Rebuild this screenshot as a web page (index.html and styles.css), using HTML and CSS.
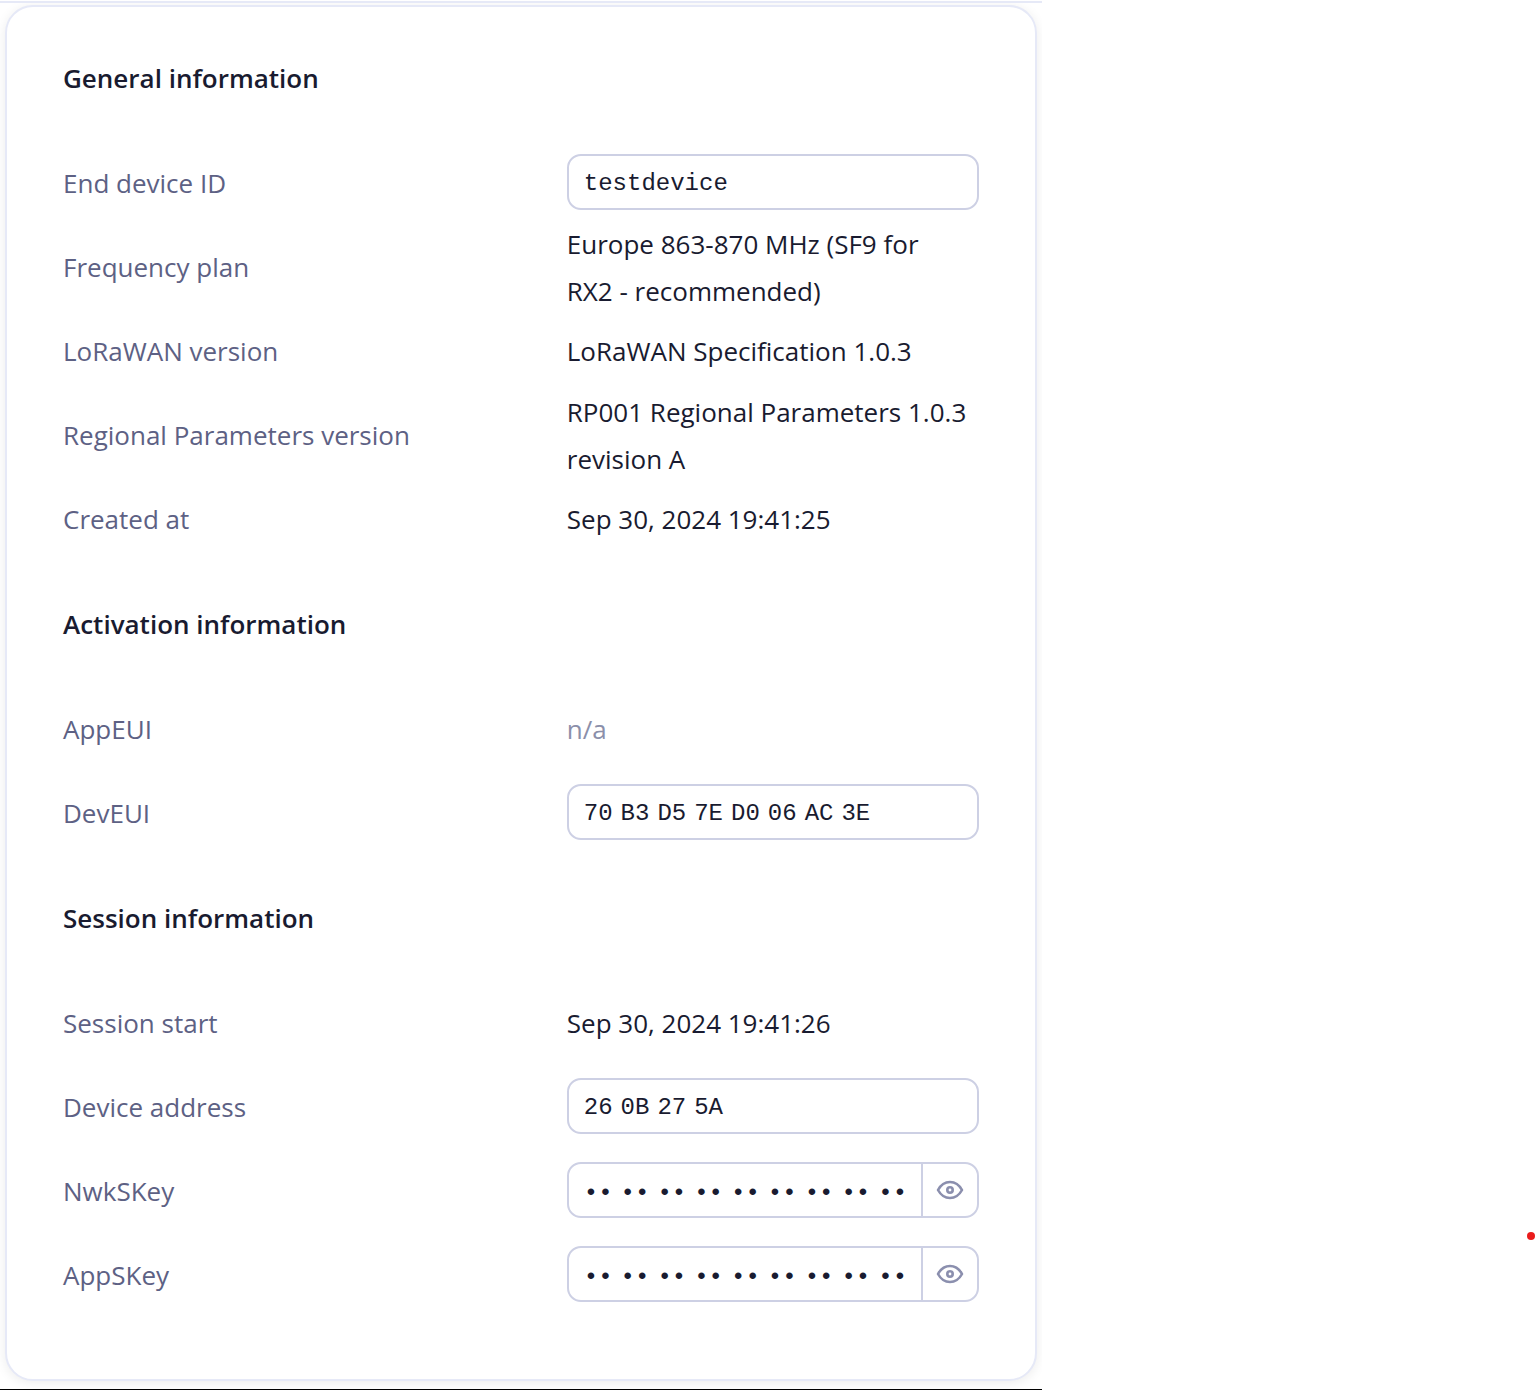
FILE: index.html
```html
<!DOCTYPE html>
<html lang="en">
<head>
<meta charset="utf-8">
<title>End device overview</title>
<link rel="stylesheet" href="styles.css">
</head>
<body>
<svg class="sprite" aria-hidden="true">
  <symbol id="eye" viewBox="0 0 28 20">
    <path d="M2 10C5 4.500 9.200 2 14 2s9 2.500 12 8c-3 5.500-7.200 8-12 8S5 15.500 2 10z" fill="none" stroke="currentColor" stroke-width="2.600" stroke-linejoin="round"/>
    <circle cx="14" cy="10" r="2.700" fill="none" stroke="currentColor" stroke-width="2.600"/>
  </symbol>
</svg>
<main class="pane">
  <div class="card">
    <section class="group">
      <h2 class="group-title">General information</h2>
      <div class="row">
        <label class="name" for="device-id">End device ID</label>
        <div class="field"><input class="code" id="device-id" value="testdevice" readonly></div>
      </div>
      <div class="row"><span class="name">Frequency plan</span><span class="value">Europe 863-870 MHz (SF9 for RX2&nbsp;-&nbsp;recommended)</span></div>
      <div class="row"><span class="name">LoRaWAN version</span><span class="value">LoRaWAN Specification 1.0.3</span></div>
      <div class="row"><span class="name">Regional Parameters version</span><span class="value">RP001 Regional Parameters 1.0.3 revision A</span></div>
      <div class="row"><span class="name">Created at</span><span class="value">Sep 30, 2024 19:41:25</span></div>
    </section>
    <section class="group">
      <h2 class="group-title">Activation information</h2>
      <div class="row"><span class="name">AppEUI</span><span class="value empty">n/a</span></div>
      <div class="row">
        <label class="name" for="dev-eui">DevEUI</label>
        <div class="field"><input class="code" id="dev-eui" value="70&#x2004;B3&#x2004;D5&#x2004;7E&#x2004;D0&#x2004;06&#x2004;AC&#x2004;3E" readonly></div>
      </div>
    </section>
    <section class="group">
      <h2 class="group-title">Session information</h2>
      <div class="row"><span class="name">Session start</span><span class="value">Sep 30, 2024 19:41:26</span></div>
      <div class="row">
        <label class="name" for="dev-addr">Device address</label>
        <div class="field"><input class="code" id="dev-addr" value="26&#x2004;0B&#x2004;27&#x2004;5A" readonly></div>
      </div>
      <div class="row">
        <label class="name" for="nwk-key">NwkSKey</label>
        <div class="field">
          <input class="code masked" id="nwk-key" value="••&#x2004;••&#x2004;••&#x2004;••&#x2004;••&#x2004;••&#x2004;••&#x2004;••&#x2004;••" readonly>
          <button class="reveal" type="button" aria-label="Show NwkSKey"><svg class="eye"><use href="#eye"/></svg></button>
        </div>
      </div>
      <div class="row">
        <label class="name" for="app-key">AppSKey</label>
        <div class="field">
          <input class="code masked" id="app-key" value="••&#x2004;••&#x2004;••&#x2004;••&#x2004;••&#x2004;••&#x2004;••&#x2004;••&#x2004;••" readonly>
          <button class="reveal" type="button" aria-label="Show AppSKey"><svg class="eye"><use href="#eye"/></svg></button>
        </div>
      </div>
    </section>
  </div>
</main>
<span class="marker"></span>
</body>
</html>
```
FILE: styles.css
```css
* { box-sizing: border-box; }

body {
  margin: 0;
  position: relative;
  background: #fff;
  color: #191b30;
  font: 26px/47px "Segoe UI", "Open Sans", sans-serif;
}

.sprite { display: none; }

.pane {
  max-width: 1042px;
  margin-top: 1px;
  padding: 2px 5px 8px;
  border-top: 2px solid #e6e9f7;
  border-bottom: 1px solid #000;
  overflow: hidden;
}

.card {
  padding: 50px 56px 63px;
  border: 2px solid #e6e9f7;
  border-radius: 28px;
  background: #fff;
  box-shadow: 0 2px 12px rgba(0, 0, 0, 0.08);
}

.group + .group { margin-top: 43px; }

.group-title {
  margin: 0 0 41px;
  font-size: 26px;
  line-height: 42px;
  font-weight: 600;
}

.row {
  display: grid;
  grid-template-columns: 55% 45%;
  align-items: center;
  align-content: center;
  height: 84px;
}

.name,
.value { padding-top: 3px; }

.name { color: #5d6184; }

.empty { color: #8b8faa; }

.field {
  display: flex;
  height: 56px;
  border: 2px solid #cdd0e4;
  border-radius: 14px;
  overflow: hidden;
}

.code {
  flex: 1;
  min-width: 0;
  padding: 2px 0 0 15px;
  border: 0;
  outline: 0;
  background: none;
  color: #191b30;
  font: 24px "Liberation Mono", "DejaVu Sans", monospace;
}

.masked { padding-top: 6px; }

.reveal {
  display: flex;
  align-items: center;
  justify-content: center;
  width: 56px;
  padding: 0;
  border: 0;
  border-left: 2px solid #cdd0e4;
  background: none;
  color: #8b8fae;
  cursor: pointer;
}

.eye {
  width: 28px;
  height: 20px;
}

.marker {
  position: absolute;
  top: 1232px;
  right: 1px;
  width: 8px;
  height: 8px;
  border-radius: 50%;
  background: #ea1c1c;
}
```
